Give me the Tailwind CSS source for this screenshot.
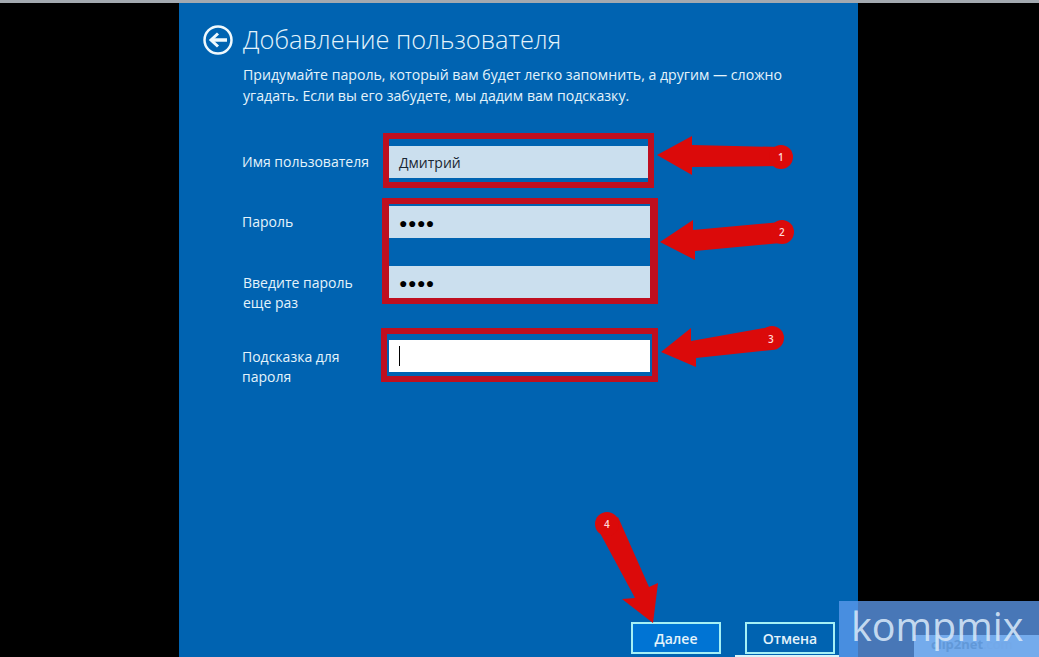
<!DOCTYPE html>
<html lang="ru"><head>
<meta charset="utf-8"/>
<meta content="width=device-width, initial-scale=1.0" name="viewport"/>
<title>Добавление пользователя</title>
<script src="https://cdn.jsdelivr.net/npm/@tailwindcss/browser@4"></script>
</head>
<body class="bg-black font-['Open_Sans','Noto_Sans',sans-serif] overflow-hidden">
<div class="relative w-[1039px] h-[657px] overflow-hidden bg-black">
<div class="h-[3px] bg-[#a3a9b0]"></div>

<!-- blue setup panel -->
<main class="ml-[179px] w-[679px] h-[654px] bg-[#0063b1] flex flex-col text-white">
<header class="pl-[24px] pt-[20px] flex items-center gap-[10px]">
<svg class="w-[30px] h-[30px] mt-[2px]" viewBox="0 0 30 30" fill="none" stroke="#f0f9fd">
<circle cx="15" cy="15" r="13.5" stroke-width="2.5"></circle>
<path d="M24 15H9" stroke-width="3.5"></path>
<path d="M15 8.5L8 15l7 6.5" stroke-width="3"></path>
</svg>
<h1 class="text-[25.4px] leading-[32px] font-light text-[#e4f3fb]">Добавление пользователя</h1>
</header>
<p class="pl-[64px] pt-[9px] w-[640px] text-[14.15px] leading-[21px] text-[#e4f3fb]">Придумайте пароль, который вам будет легко запомнить, а другим — сложно угадать. Если вы его забудете, мы дадим вам подсказку.</p>

<div class="pl-[63px] pt-[40px] flex flex-col text-[14px] leading-[20px] text-[#e4f3fb]">
<div class="flex items-center h-[32px] mb-[28px]">
<div class="w-[147px]">Имя пользователя</div>
<div class="w-[259px] h-[32px] bg-[#cbdfee] text-[#1a2733] px-[10px] leading-[34px]">Дмитрий</div>
</div>
<div class="flex items-center h-[32px] mb-[28px]">
<div class="w-[147px]">Пароль</div>
<div class="w-[261px] h-[32px] bg-[#cbdfee] text-[#000] px-[10px] leading-[34px] tracking-[0.5px]">●●●●</div>
</div>
<div class="flex h-[32px] mb-[42px]">
<div class="w-[147px] pl-px pt-[7px]">Введите пароль<br/>еще раз</div>
<div class="w-[261px] h-[32px] bg-[#cbdfee] text-[#000] px-[10px] leading-[34px] tracking-[0.5px]">●●●●</div>
</div>
<div class="flex h-[32px]">
<div class="w-[147px] pt-[7px]">Подсказка для<br/>пароля</div>
<div class="w-[261px] h-[32px] bg-white flex items-center pl-[10px]"><span class="w-px h-[20px] bg-black"></span></div>
</div>
</div>

<div class="mt-auto flex gap-[24px] pl-[452px] pb-[3px] text-[14px] font-semibold">
<button class="w-[90px] h-[32px] border-2 border-[#a5f0f5] bg-[#0074d4] text-[#e4f3fb]">Далее</button>
<button class="w-[90px] h-[32px] border-2 border-[#a5f0f5] text-[#e4f3fb]">Отмена</button>
</div>
</main>
<div class="absolute left-[735px] top-[655px] w-[104px] h-[2px] bg-[#d8f4f8]"></div>

<!-- red annotation frames -->
<div class="absolute left-[383px] top-[133px] w-[271px] h-[55px] border-[6px] border-[#bf0f1f]"></div>
<div class="absolute left-[382px] top-[198px] w-[276px] h-[106px] border-[6px] border-l-[7px] border-r-[8px] border-[#bf0f1f]"></div>
<div class="absolute left-[381px] top-[328px] w-[277px] h-[54px] border-[6px] border-[#bf0f1f]"></div>

<!-- red arrows -->
<svg class="absolute left-0 top-0 w-[1039px] h-[657px]" viewBox="0 0 1039 657" fill="#db0a0a">
<path d="M657 155L692 136V145L780 147V166L692 167V175Z"></path>
<circle cx="781" cy="157" r="12"></circle>
<path d="M660 242L693 220V230L781 222V243L695 251V260Z"></path>
<circle cx="782" cy="232" r="12"></circle>
<path d="M661 352L691 328V341L770 327L772 350L696 358V367Z"></path>
<circle cx="772" cy="338" r="12"></circle>
<path d="M600 533L635 598L622 599L653 623L658 583L649 587L618 517Z"></path>
<circle cx="607" cy="524" r="12"></circle>
</svg>
<div class="absolute left-[778px] top-[150px] text-[10px] leading-[14px] text-[#ffd9d9] font-semibold">1</div>
<div class="absolute left-[779px] top-[225px] text-[10px] leading-[14px] text-[#ffd9d9] font-semibold">2</div>
<div class="absolute left-[768px] top-[332px] text-[10px] leading-[14px] text-[#ffd9d9] font-semibold">3</div>
<div class="absolute left-[604px] top-[517px] text-[10px] leading-[14px] text-[#ffd9d9] font-semibold">4</div>

<!-- watermark -->
<div class="absolute left-[839px] top-[601px] w-[200px] h-[56px] bg-[#5e9bee]/77">
<div class="absolute left-[75px] top-[34px] w-[125px] h-[22px] bg-[#79b0f2]/90 text-[#6198d8] text-[13px] font-bold leading-[18px] pl-[17px]">clip2net<span class="font-normal text-[#73a8e8]">.com</span></div>
<div class="absolute left-0 top-0 pl-[12px] text-[#d5e6f7]/90 text-[39.5px] leading-[50px]">kompmix</div>
</div>
</div>
</body></html>
